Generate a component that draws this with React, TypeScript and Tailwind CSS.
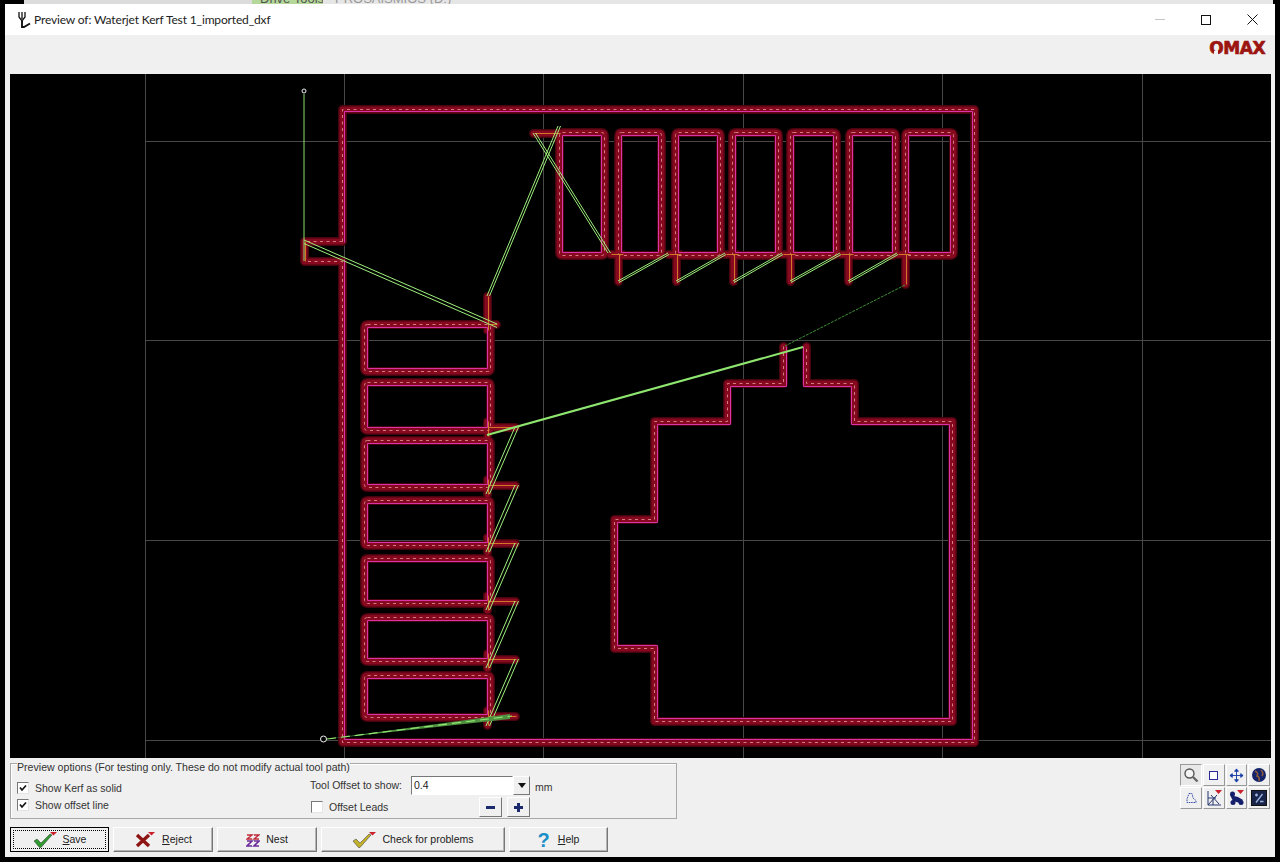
import type { ReactNode } from 'react'

const GRID_X = [145, 344, 543, 743, 942, 1142]
const GRID_Y = [141, 340, 540, 740]

const TOP_SLOTS = [
  [562, 601],
  [621, 658],
  [678, 717],
  [735, 775],
  [793, 833],
  [852, 892],
  [908, 950],
]
const LEFT_SLOTS = [
  [327, 368],
  [385, 427],
  [443, 484],
  [503, 542],
  [561, 600],
  [620, 658],
  [678, 714],
]
const TOP_LEADS = [618, 676, 733, 790, 848, 905]
const LEFT_LEADS = [427, 485, 543, 601, 659, 716]

const OUTER_DASH = 'M342 241 V109 H974 V742 H342 V261 H304 M342 241 H304'
const OUTER_LINE = 'M344 242 V111 H972 V739 H344 V259'
const PART_DASH = 'M783 346 V383 H727 V421 H654 V519 H614 V648 H654 V721 H952 V421 H854 V383 H806 V346'
const PART_LINE = 'M786 346 V386 H730 V424 H657 V522 H617 V645 H657 V718 H949 V424 H851 V386 H803 V346'

function rectPath(x1: number, y1: number, x2: number, y2: number) {
  return `M${x1} ${y1} H${x2} V${y2} H${x1} Z`
}

function roundedRect(x1: number, y1: number, x2: number, y2: number) {
  return `M${x1 + 3} ${y1} H${x2 - 3} Q${x2} ${y1} ${x2} ${y1 + 3} V${y2 - 3} Q${x2} ${y2} ${x2 - 3} ${y2} H${x1 + 3} Q${x1} ${y2} ${x1} ${y2 - 3} V${y1 + 3} Q${x1} ${y1} ${x1 + 3} ${y1} Z`
}

function buildLeads() {
  const parts: string[] = ['M533 133 H559', 'M487 296 V330', 'M487 324 H496', 'M304 241 V261']
  TOP_LEADS.forEach((x, i) => {
    parts.push(`M${x} 254 V${i === 5 ? 284 : 281}`)
    parts.push(`M${x - 8} 254 H${x + 4}`)
  })
  LEFT_LEADS.forEach((y) => {
    parts.push(`M487 ${y - 6} V${y + 9}`)
    parts.push(`M487 ${y} H515`)
  })
  return parts.join(' ')
}

function GreenPair({ x1, y1, x2, y2, dx = 2.5, dy = 0 }: { x1: number; y1: number; x2: number; y2: number; dx?: number; dy?: number }) {
  return (
    <g stroke="#9ef07c" strokeWidth="1" fill="none">
      <line x1={x1} y1={y1} x2={x2} y2={y2} />
      <line x1={x1 + dx} y1={y1 + dy} x2={x2 + dx} y2={y2 + dy} />
    </g>
  )
}

function PathPreview() {
  const slotDash = [
    ...TOP_SLOTS.map(([a, b]) => roundedRect(a - 3, 132, b + 3, 255)),
    ...LEFT_SLOTS.map(([a, b]) => roundedRect(364, a - 3, 490, b + 3)),
  ].join(' ')
  const slotLine = [
    ...TOP_SLOTS.map(([a, b]) => rectPath(a, 135, b, 252)),
    ...LEFT_SLOTS.map(([a, b]) => rectPath(367, a, 487, b)),
  ].join(' ')
  const leads = buildLeads()
  const kerf = `${OUTER_DASH} ${PART_DASH} ${slotDash}`

  return (
    <svg viewBox="10 74 1261 684" className="block h-[684px] w-[1261px]">
      <rect x="10" y="74" width="1261" height="684" fill="#000" />
      <g stroke="#484848" strokeWidth="1">
        {GRID_X.map((x) => (
          <line key={x} x1={x + 0.5} y1="74" x2={x + 0.5} y2="758" />
        ))}
        {GRID_Y.map((y) => (
          <line key={y} x1="145" y1={y + 0.5} x2="1271" y2={y + 0.5} />
        ))}
      </g>

      <g fill="none" strokeLinejoin="round" strokeLinecap="round" transform="translate(0.5 0.5)">
        <path d={`${kerf} ${leads}`} stroke="#47040f" strokeWidth="9" />
        <path d={`${kerf} ${leads}`} stroke="#86091f" strokeWidth="6" />
        <path d={`${OUTER_LINE} ${PART_LINE} ${slotLine}`} stroke="#d833a8" strokeWidth="1" strokeLinecap="butt" />
        <path d={kerf} stroke="#dc8a8a" strokeWidth="0.9" strokeDasharray="3 3.5" strokeLinecap="butt" />
        <path d={leads} stroke="#d9832a" strokeWidth="0.9" strokeLinecap="butt" transform="translate(1 0)" />
      </g>

      <line x1="304" y1="94" x2="304" y2="261" stroke="#8fe070" strokeWidth="1" />
      <GreenPair x1={304} y1={240} x2={497} y2={324} dx={0} dy={3.5} />
      <GreenPair x1={487} y1={296} x2={558} y2={126} />
      <GreenPair x1={533} y1={133} x2={608} y2={253} />
      {TOP_LEADS.slice(0, 5).map((x, i) => (
        <GreenPair key={x} x1={x} y1={281} x2={TOP_LEADS[i + 1] - 8} y2={253} dx={1} dy={1.5} />
      ))}
      {LEFT_LEADS.slice(0, 5).map((y) => (
        <GreenPair key={y} x1={486} y1={y + 67} x2={515} y2={y} dx={3.5} />
      ))}

      <line x1="905" y1="285" x2="785" y2="346" stroke="#3f8f35" strokeWidth="1" strokeDasharray="3 1" />
      <line x1="487" y1="435" x2="803" y2="347" stroke="#8ee66f" strokeWidth="2" />
      <polygon points="327,739 510,714 510,719" fill="#4f8f40" />
      <line x1="327" y1="739" x2="512" y2="716" stroke="#8ee66f" strokeWidth="1.2" strokeDasharray="9 5" />

      <circle cx="304" cy="91" r="2" fill="#000" stroke="#f2f2f2" strokeWidth="1" />
      <circle cx="323.5" cy="739" r="3" fill="#000" stroke="#f2f2f2" strokeWidth="1" />
    </svg>
  )
}

function NozzleIcon() {
  return (
    <svg viewBox="0 0 14 18" className="h-[18px] w-[14px] shrink-0">
      <path d="M2 1 V6 L5 10 L8 6 V1 M5 1 V8" fill="none" stroke="#111" strokeWidth="1.3" />
      <path d="M5 10 V16 H7 L13 12.5" fill="none" stroke="#111" strokeWidth="1.9" />
    </svg>
  )
}

function TriangleMark({ x, y }: { x: number; y: number }) {
  return <polygon points={`${x},${y} ${x + 7},${y} ${x + 3.5},${y + 3.5}`} fill="#c9202c" />
}

function CheckIcon({ yellow = false }: { yellow?: boolean }) {
  return (
    <svg viewBox="0 0 24 16" className="h-4 w-6 shrink-0">
      <path d="M1 9 L4 7 L8 11 L17 2 L19 3 L8 15.5 L6.5 15.5 Z" fill={yellow ? '#c2b02a' : '#2f9a2f'} stroke="#333" strokeWidth="0.5" />
      <TriangleMark x={17} y={0} />
    </svg>
  )
}

function RejectIcon() {
  return (
    <svg viewBox="0 0 22 16" className="h-4 w-[22px] shrink-0">
      <path d="M3 3 L15 14 M15 3 L3 14" fill="none" stroke="#8e1414" strokeWidth="3.4" />
      <TriangleMark x={14} y={0} />
    </svg>
  )
}

function NestIcon() {
  return (
    <svg viewBox="0 0 14 16" className="h-4 w-[14px] shrink-0">
      <path d="M1 3 H6 L1 7 H6 M8 3 H13 L8 7 H13" fill="none" stroke="#c02a3a" strokeWidth="1.4" />
      <path d="M1 9 H6 L1 14 H6 M8 9 H13 L8 14 H13" fill="none" stroke="#6a2a9a" strokeWidth="1.6" />
    </svg>
  )
}

function Btn({ width, icon, children, focused = false }: { width: string; icon: ReactNode; children: ReactNode; focused?: boolean }) {
  return (
    <button
      type="button"
      className={
        focused
          ? `${width} flex h-[25px] items-center justify-center gap-[6px] border border-black bg-[#f0f0f0] text-[10.5px] text-[#222] outline-1 -outline-offset-4 outline-black outline-dotted`
          : `${width} flex h-[25px] items-center justify-center gap-[6px] border border-t-white border-r-[#777] border-b-[#777] border-l-white bg-[#f0f0f0] text-[10.5px] text-[#222] shadow-[inset_-1px_-1px_0_#b4b4b4]`
      }
    >
      {icon}
      <span>{children}</span>
    </button>
  )
}

function CheckBox({ checked = false }: { checked?: boolean }) {
  return (
    <span className="flex h-3 w-3 shrink-0 items-center justify-center border border-t-[#777] border-r-[#e4e4e4] border-b-[#e4e4e4] border-l-[#777] bg-white">
      {checked && (
        <svg viewBox="0 0 10 10" className="h-[10px] w-[10px]">
          <path d="M2 4.5 L4 7 L8 2.5" fill="none" stroke="#111" strokeWidth="1.7" />
        </svg>
      )}
    </span>
  )
}

function ToolBtn({ width, pressed = false, children }: { width: string; pressed?: boolean; children: ReactNode }) {
  return (
    <div
      className={
        pressed
          ? `${width} flex h-[22px] items-center justify-center border border-t-[#999] border-r-white border-b-white border-l-[#999] bg-[#e8e8e8]`
          : `${width} flex h-[22px] items-center justify-center border border-t-white border-r-[#999] border-b-[#999] border-l-white bg-[#f0f0f0]`
      }
    >
      {children}
    </div>
  )
}

function ViewTools() {
  return (
    <div className="mt-[6px] flex w-[90px] flex-col gap-[1px]">
      <div className="flex gap-[1px]">
        <ToolBtn width="w-[22px]" pressed>
          <svg viewBox="0 0 16 16" className="h-4 w-4">
            <circle cx="6.5" cy="6.5" r="4.5" fill="#f4f4f4" stroke="#555" strokeWidth="1.4" />
            <path d="M10 10 L14.5 14.5" stroke="#666" strokeWidth="2.4" />
          </svg>
        </ToolBtn>
        <ToolBtn width="w-[23px]">
          <span className="block h-[9px] w-[9px] border border-[#2a2a9a] bg-white" />
        </ToolBtn>
        <ToolBtn width="w-[22px]">
          <svg viewBox="0 0 16 16" className="h-[15px] w-[15px]">
            <path d="M8 1 V15 M1 8 H15 M8 1 L6 3.5 H10 Z M8 15 L6 12.5 H10 Z M1 8 L3.5 6 V10 Z M15 8 L12.5 6 V10 Z" fill="#1c3fa8" stroke="#1c3fa8" strokeWidth="1" />
          </svg>
        </ToolBtn>
        <ToolBtn width="w-[22px]">
          <svg viewBox="0 0 16 16" className="h-4 w-4">
            <circle cx="8" cy="8" r="7" fill="#14246a" />
            <path d="M4 4 Q8 6 6 9 Q9 10 8 14 M10 3 Q13 6 11 9" fill="none" stroke="#8c5a3c" strokeWidth="1.6" />
          </svg>
        </ToolBtn>
      </div>
      <div className="flex gap-[1px]">
        <ToolBtn width="w-[22px]">
          <svg viewBox="0 0 12 12" className="h-3 w-3">
            <path d="M4 1.5 H7 L8 6 L11 8.5 V10.5 H2 V7 Z" fill="none" stroke="#2a3fa0" strokeWidth="0.9" strokeDasharray="1.6 0.8" />
          </svg>
        </ToolBtn>
        <ToolBtn width="w-[23px]">
          <svg viewBox="0 0 18 18" className="h-[18px] w-[18px]">
            <path d="M3 2 V16 H16 M3 16 L12 6 M6 6 L14 15 M3 9 H11 M8 16 V10" fill="none" stroke="#27356f" strokeWidth="1" />
            <polygon points="10,1 17,1 13.5,5" fill="#c9202c" />
          </svg>
        </ToolBtn>
        <ToolBtn width="w-[22px]">
          <svg viewBox="0 0 18 18" className="h-[18px] w-[18px]">
            <path d="M2 6 L10 8 L15 11 L12 14 L5 12 Z" fill="#141e6a" />
            <circle cx="4.5" cy="5" r="2.5" fill="#141e6a" />
            <circle cx="5" cy="13.5" r="2.5" fill="#141e6a" />
            <circle cx="13" cy="13.5" r="2.5" fill="#141e6a" />
            <polygon points="9,1 16,1 12.5,5" fill="#c9202c" />
          </svg>
        </ToolBtn>
        <ToolBtn width="w-[22px]">
          <svg viewBox="0 0 16 16" className="h-4 w-4">
            <rect x="0.5" y="0.5" width="15" height="15" fill="#1a2348" stroke="#111" />
            <path d="M4 5 H7 M5.5 3.5 V6.5 M11.5 4 L5 12.5 M9 11.5 H12.5" stroke="#9ab6e8" strokeWidth="1.3" fill="none" />
          </svg>
        </ToolBtn>
      </div>
    </div>
  )
}

export default function App() {
  return (
    <div className="flex h-[862px] w-[1280px] flex-col overflow-hidden bg-black font-['Liberation_Sans',sans-serif]">
      <div className="flex h-1 shrink-0 overflow-hidden pl-6 text-[13px] leading-none text-[#555]">
        <div className="w-[228px] bg-[#dcdcdc]" />
        <div className="w-[71px] bg-[#b4d89a]">
          <span className="-mt-[8px] block pl-2 whitespace-nowrap">Drive Tools</span>
        </div>
        <div className="w-[950px] bg-[#e6e6e6]">
          <span className="-mt-[8px] block pl-3 whitespace-nowrap text-[#999]">PROSAISMIOS (D:)</span>
        </div>
      </div>

      <div className="ml-[5px] flex h-[853px] w-[1270px] flex-col bg-[#f0f0f0]">
        <div className="flex h-[31px] shrink-0 items-center justify-between bg-white pl-3">
          <div className="flex items-center gap-[3px]">
            <NozzleIcon />
            <span className="font-['Lato',sans-serif] text-[12px] tracking-[-0.15px] text-[#222]">Preview of: Waterjet Kerf Test 1_imported_dxf</span>
          </div>
          <div className="flex items-center">
            <div className="flex h-[31px] w-[46px] items-center justify-center">
              <span className="block h-px w-[10px] bg-[#c4c4c4]" />
            </div>
            <div className="flex h-[31px] w-[46px] items-center justify-center">
              <span className="block h-[10px] w-[10px] border border-[#111]" />
            </div>
            <div className="flex h-[31px] w-[46px] items-center justify-center">
              <svg viewBox="0 0 11 11" className="h-[11px] w-[11px]">
                <path d="M0.5 0.5 L10.5 10.5 M10.5 0.5 L0.5 10.5" stroke="#111" strokeWidth="1" />
              </svg>
            </div>
          </div>
        </div>

        <div className="flex h-[39px] shrink-0 items-start justify-end pt-[5px] pr-[10px]">
          <span className="relative font-['DejaVu_Sans',sans-serif] text-[17px] leading-none font-bold tracking-[-0.5px] text-[#9c1510] [-webkit-text-stroke:0.7px_#9c1510]">
            OMAX
            <span className="absolute bottom-[2px] left-[5px] h-[4px] w-[4px] bg-[#f0f0f0]" />
          </span>
        </div>

        <div className="ml-[5px] w-[1261px] shrink-0 border-t border-[#777]">
          <div className="-mt-px">
            <PathPreview />
          </div>
        </div>

        <div className="flex shrink-0 items-start justify-between pr-[5px] pl-[5px]">
          <div className="relative mt-[5px] flex h-[56px] w-[667px] border border-[#a8a8a8] pt-[12px] pl-[6px] text-[10.5px] leading-none text-[#333] shadow-[inset_1px_1px_0_#fff]">
            <span className="absolute top-[-2px] left-[6px] bg-[#f0f0f0] pb-px text-[10.6px] whitespace-nowrap">Preview options (For testing only. These do not modify actual tool path)</span>
            <div className="flex w-[293px] shrink-0 flex-col gap-[5px] pt-[6px]">
              <label className="flex h-3 items-center gap-[6px]">
                <CheckBox checked />
                Show Kerf as solid
              </label>
              <label className="flex h-3 items-center gap-[6px]">
                <CheckBox checked />
                Show offset line
              </label>
            </div>
            <div className="flex flex-col">
              <div className="flex h-[19px] items-center">
                <span className="w-[101px] shrink-0 whitespace-nowrap">Tool Offset to show:</span>
                <span className="flex h-[19px] w-[102px] items-center border border-t-[#777] border-r-white border-b-white border-l-[#777] bg-white pl-[2px] text-[#222]">0.4</span>
                <span className="flex h-[19px] w-[17px] items-center justify-center border border-t-white border-r-[#777] border-b-[#777] border-l-white bg-[#f0f0f0]">
                  <svg viewBox="0 0 8 5" className="h-[5px] w-2">
                    <polygon points="0,0 8,0 4,5" fill="#111" />
                  </svg>
                </span>
                <span className="mt-[3px] ml-[5px]">mm</span>
              </div>
              <div className="mt-[2px] flex h-[20px] items-center pl-[1px]">
                <CheckBox />
                <span className="ml-[6px] w-[150px] shrink-0 whitespace-nowrap">Offset Leads</span>
                <span className="flex h-[20px] w-[23px] items-center justify-center border border-t-white border-r-[#777] border-b-[#777] border-l-white">
                  <span className="block h-[3px] w-[9px] bg-[#1c2a6e]" />
                </span>
                <span className="ml-[5px] flex h-[20px] w-[23px] items-center justify-center border border-t-white border-r-[#777] border-b-[#777] border-l-white">
                  <svg viewBox="0 0 9 9" className="h-[9px] w-[9px]">
                    <path d="M4.5 0 V9 M0 4.5 H9" stroke="#1c2a6e" strokeWidth="3" />
                  </svg>
                </span>
              </div>
            </div>
          </div>
          <ViewTools />
        </div>

        <div className="mt-[8px] flex gap-[4px] pl-[5px]">
          <Btn width="w-[99px]" focused icon={<CheckIcon />}>
            <u>S</u>ave
          </Btn>
          <Btn width="w-[100px]" icon={<RejectIcon />}>
            <u>R</u>eject
          </Btn>
          <Btn width="w-[100px]" icon={<NestIcon />}>
            Nest
          </Btn>
          <Btn width="w-[184px]" icon={<CheckIcon yellow />}>
            Check for problems
          </Btn>
          <Btn width="w-[99px]" icon={<span className="mr-[2px] text-[20px] leading-none font-bold text-[#1c8fc9]">?</span>}>
            <u>H</u>elp
          </Btn>
        </div>
      </div>
    </div>
  )
}
